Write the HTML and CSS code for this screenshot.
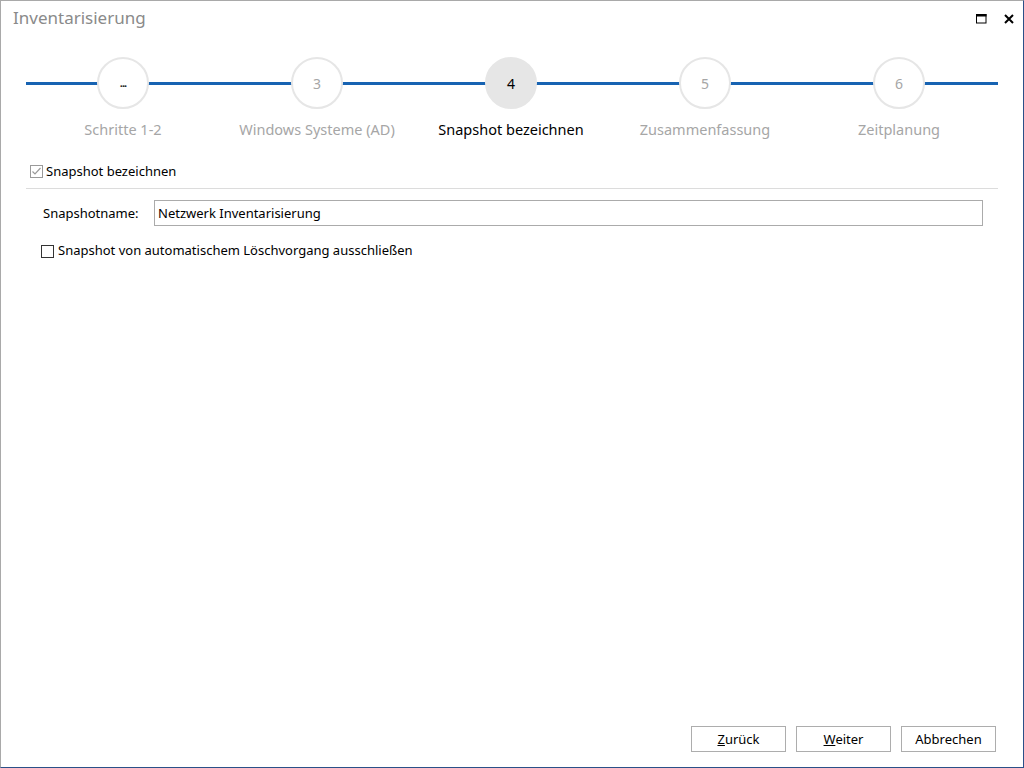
FILE: index.html
```html
<!DOCTYPE html>
<html lang="de">
<head>
<meta charset="utf-8">
<title>Inventarisierung</title>
<link rel="stylesheet" href="styles.css">
</head>
<body>
<div class="window">
  <div class="titlebar">
    <div class="title">Inventarisierung</div>
    <div class="controls">
      <svg class="ico" width="11" height="10" viewBox="0 0 11 10"><rect x="0.5" y="0.5" width="9.5" height="8.5" fill="none" stroke="#000" stroke-width="1"/><rect x="0" y="0" width="10.5" height="2.5" fill="#000"/></svg>
      <svg class="ico close" width="10" height="10" viewBox="0 0 10 10"><path d="M1 1 L9 9 M9 1 L1 9" stroke="#000" stroke-width="2"/></svg>
    </div>
  </div>

  <div class="stepper">
    <div class="track">
      <div class="step"><div class="circle dots">...</div></div>
      <div class="step"><div class="circle">3</div></div>
      <div class="step"><div class="circle active">4</div></div>
      <div class="step"><div class="circle">5</div></div>
      <div class="step"><div class="circle">6</div></div>
    </div>
    <div class="labels">
      <div class="label">Schritte 1-2</div>
      <div class="label">Windows Systeme (AD)</div>
      <div class="label current">Snapshot bezeichnen</div>
      <div class="label">Zusammenfassung</div>
      <div class="label">Zeitplanung</div>
    </div>
  </div>

  <div class="content">
    <div class="check-row main">
      <span class="box checked"><svg width="11" height="11" viewBox="0 0 11 11"><path d="M1.5 5.5 L4 8 L9.5 2" fill="none" stroke="#9a9a9a" stroke-width="1.2"/></svg></span>
      <span class="check-text">Snapshot bezeichnen</span>
    </div>
    <div class="separator"></div>
    <div class="field-row">
      <span class="field-label">Snapshotname:</span>
      <div class="input">Netzwerk Inventarisierung</div>
    </div>
    <div class="check-row sub">
      <span class="box"></span>
      <span class="check-text">Snapshot von automatischem Löschvorgang ausschließen</span>
    </div>
  </div>

  <div class="footer">
    <button class="btn"><u>Z</u>urück</button>
    <button class="btn"><u>W</u>eiter</button>
    <button class="btn">Abbrechen</button>
  </div>
</div>
</body>
</html>
```

FILE: styles.css
```css
* { box-sizing: border-box; }
html, body { margin: 0; padding: 0; background: #fff; }
body { font-family: "Noto Sans", "Open Sans", sans-serif; color: #000; }

.window {
  width: 1024px;
  height: 768px;
  border-top: 1px solid #a9a9a9;
  border-left: 1px solid #a9a9a9;
  border-right: 1px solid #2b5088;
  border-bottom: 1px solid #2b5088;
  display: flex;
  flex-direction: column;
  background: #fff;
}

.titlebar {
  height: 34px;
  display: flex;
  align-items: center;
  justify-content: space-between;
  padding: 0 9px 0 12px;
}
.title {
  font-size: 17px;
  color: #8a8a8a;
  line-height: 34px;
}
.controls { display: flex; align-items: center; gap: 17px; padding-top: 2px; }
.ico { display: block; }

.stepper { margin-top: 22px; padding: 0 25px 0 25px; }
.track {
  display: grid;
  grid-template-columns: repeat(5, 194px);
  width: 972px;
  background: linear-gradient(#1763b2, #1763b2) no-repeat 0 25px / 100% 3px;
}
.step { display: flex; justify-content: center; }
.circle {
  width: 52px;
  height: 52px;
  border-radius: 50%;
  border: 2px solid #e6e6e6;
  background: #fff;
  display: flex;
  align-items: center;
  justify-content: center;
  font-size: 14px;
  color: #a6a6a6;
}
.circle.active { background: #e6e6e6; color: #000; }
.circle.dots { color: #222; font-size: 11px; font-weight: bold; letter-spacing: -1px; padding-bottom: 2px; }

.labels {
  display: grid;
  grid-template-columns: repeat(5, 194px);
  margin-top: 10px;
}
.label {
  text-align: center;
  font-size: 14.5px;
  line-height: 20px;
  color: #a6a6a6;
}
.label.current { color: #000; }

.content { padding: 0 25px; margin-top: 22px; font-size: 13px; }
.check-row { display: flex; align-items: center; height: 20px; }
.check-row.main { padding-left: 4px; }
.check-row.sub { padding-left: 15px; margin-top: 14px; }
.box {
  width: 13px;
  height: 13px;
  border: 1px solid #333;
  background: #fff;
  display: flex;
  align-items: center;
  justify-content: center;
  margin-right: 3px;
}
.box.checked { border-color: #9a9a9a; }
.check-row.sub .box { margin-right: 4px; margin-top: 2px; }
.check-text { line-height: 20px; }

.separator { height: 1px; background: #dcdcdc; margin-top: 7px; width: 972px; }

.field-row { display: flex; align-items: center; margin-top: 11px; padding-left: 17px; }
.field-label { width: 111px; }
.input {
  width: 829px;
  height: 26px;
  border: 1px solid #ababab;
  padding: 0 3px;
  line-height: 24px;
}

.footer {
  margin-top: auto;
  display: flex;
  justify-content: flex-end;
  gap: 10px;
  padding: 0 27px 15px 0;
}
.btn {
  width: 95px;
  height: 26px;
  border: 1px solid #adadad;
  background: #fff;
  font-family: inherit;
  font-size: 13px;
  color: #000;
  padding: 0;
}
```
